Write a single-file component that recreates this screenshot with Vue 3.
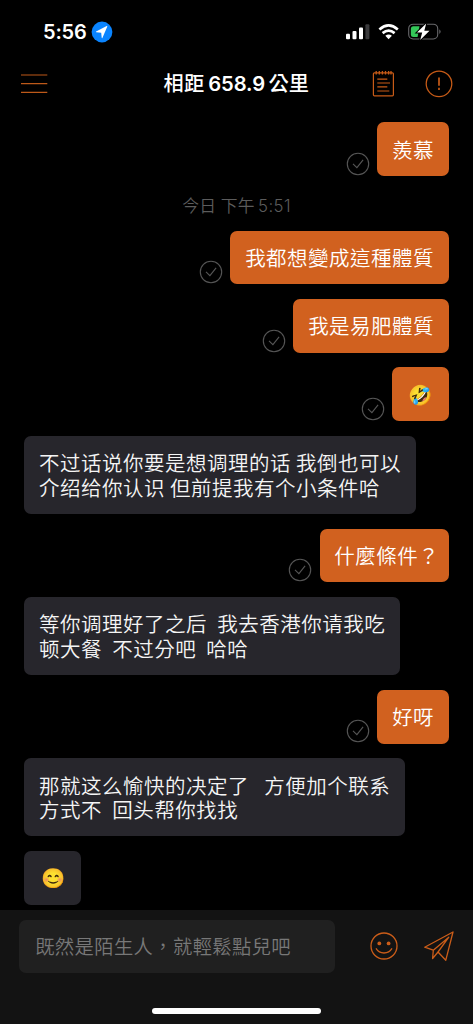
<script setup>
const messages = [
  { id: 1, mine: true, text: '羨慕' },
  { id: 2, time: '今日 下午', clock: '5:51' },
  { id: 3, mine: true, text: '我都想變成這種體質' },
  { id: 4, mine: true, text: '我是易肥體質' },
  { id: 5, mine: true, emoji: '🤣' },
  { id: 6, text: '不过话说你要是想调理的话 我倒也可以\n介绍给你认识 但前提我有个小条件哈' },
  { id: 7, mine: true, text: '什麼條件', mark: '？' },
  { id: 8, text: '等你调理好了之后  我去香港你请我吃\n顿大餐  不过分吧  哈哈' },
  { id: 9, mine: true, text: '好呀' },
  { id: 10, text: '那就这么愉快的决定了   方便加个联系\n方式不  回头帮你找找' },
  { id: 11, emoji: '😊' },
]
</script>

<template>
  <div class="screen" lang="zh-Hant">
    <div class="status">
      <span class="clock">5:56</span>
      <svg class="loc" width="22" height="22" viewBox="0 0 22 22">
        <circle cx="11" cy="11" r="10.4" fill="#0a84ff" />
        <path d="M16.3 5.5 11.4 17Q10.9 17.4 10.7 16.7L10.2 11.8 5.3 11.3Q4.6 11 5.1 10.5L15.7 5Q16.5 4.8 16.3 5.5Z" fill="#fff" />
      </svg>
      <svg class="radio" width="98" height="18" viewBox="0 0 98 18">
        <g fill="#fff">
          <rect x="2" y="10.7" width="4" height="5.5" rx="1" />
          <rect x="8.5" y="8" width="4" height="8.2" rx="1" />
          <rect x="15" y="4.5" width="4" height="11.7" rx="1" />
          <rect x="21.4" y="1.2" width="4" height="15" rx="1" fill="#3a3a3c" />
          <path d="M44.6 16.2 41.3 12.8Q44.6 10.1 47.9 12.8Z" />
        </g>
        <g fill="none" stroke="#fff" stroke-width="2.7">
          <path d="M35.4 6.4Q44.6 -1.5 53.8 6.4" />
          <path d="M38.6 10.1Q44.6 5.1 50.6 10.1" />
        </g>
        <rect x="64.7" y="1.2" width="29" height="14.8" rx="4.4" fill="none" stroke="#68686b" stroke-width="1.1" />
        <path d="M95.3 6.3Q98 8.6 95.3 11.1Z" fill="#68686b" />
        <path d="M69.4 3.2H75.5L73.6 14.1H69.4Q66.9 14.1 66.9 11.6V5.7Q66.9 3.2 69.4 3.2Z" fill="#34c759" />
        <path d="M82.2.4 73 9.5H78.2L76.2 17 85.5 7.7H80.3Z" fill="#fff" stroke="#000" stroke-width="2" paint-order="stroke" />
      </svg>
    </div>

    <header class="nav">
      <svg class="menu" width="28" height="24" viewBox="0 0 28 24" stroke="#bd5919" stroke-width="1.2">
        <path d="M1 3H27.3M1 11.7H27.3M1 20.4H27.3" />
      </svg>
      <h1 class="title">相距<span class="num">658.9</span>公里</h1>
      <svg class="note" width="24" height="28" viewBox="0 0 24 28" fill="none" stroke="#c75b17" stroke-width="1.2">
        <rect x="2.4" y="2.8" width="20" height="23" rx="1" />
        <path d="M5.2 1V4.6M8.3 1V4.6M11.4 1V4.6M14.5 1V4.6M17.6 1V4.6M20 1V4.6" stroke-width="1.3" />
        <path d="M6.3 9.1H16.3M6.3 13H19M6.3 16.9H16.3M6.3 21H18.3" />
      </svg>
      <svg class="alert" width="28" height="28" viewBox="0 0 28 28" fill="none" stroke="#c75b17">
        <circle cx="14" cy="13.8" r="12.8" stroke-width="1.25" />
        <path d="M14 7.4V15.7M14 17.8V20" stroke-width="1.7" />
      </svg>
    </header>

    <main class="chat">
      <template v-for="m in messages" :key="m.id">
        <div v-if="m.time" class="stamp">{{ m.time }}<span class="stamp-num">{{ m.clock }}</span></div>
        <div v-else class="row" :class="{ mine: m.mine }">
          <svg v-if="m.mine" class="tick" width="24" height="24" viewBox="0 0 24 24" fill="none" stroke="#565656" stroke-width="1.1">
            <circle cx="12" cy="12" r="10.7" />
            <path d="M7 11.8 10.9 15.6 17.1 7.8" />
          </svg>
          <div class="bubble">
            <span v-if="m.emoji" class="emoji">{{ m.emoji }}</span>
            <div v-else class="text">{{ m.text }}<span v-if="m.mark" class="mark">{{ m.mark }}</span></div>
          </div>
        </div>
      </template>
    </main>

    <footer class="composer">
      <div class="tools">
        <div class="field">既然是陌生人，就輕鬆點兒吧</div>
        <svg class="smile" width="28" height="28" viewBox="0 0 28 28" fill="none" stroke="#cb5d19" stroke-width="1.3">
          <circle cx="14" cy="14" r="13" />
          <path d="M6 16.4Q8.8 21 14 21T22 16.4" />
          <g fill="#cb5d19" stroke="none">
            <circle cx="9.3" cy="11.4" r="1.9" />
            <circle cx="18.6" cy="11.4" r="1.9" />
          </g>
        </svg>
        <svg class="send" width="32" height="32" viewBox="0 0 32 32" fill="none" stroke="#cb5d19" stroke-width="1.3" stroke-linejoin="round">
          <path d="M30 2 1.7 17.2 10.3 20.2 25.8 7.2 15 22 22.8 30.2ZM10.3 20.2 9.6 28.5 15 22" />
        </svg>
      </div>
      <div class="home"></div>
    </footer>
  </div>
</template>

<style>
body {
  background: #000;
}
</style>

<style scoped>
.screen {
  width: 473px;
  height: 1024px;
  overflow: hidden;
  display: flex;
  flex-direction: column;
  background: #000;
  font-family: "Noto Sans CJK TC", "Noto Sans CJK SC", sans-serif;
}
.status {
  height: 63px;
  flex: none;
  box-sizing: border-box;
  padding: 0 31px 0 43px;
  display: flex;
  align-items: center;
}
.clock {
  width: 48px;
  font: 600 20px/24px Inter, sans-serif;
  letter-spacing: -0.2px;
  color: #fff;
}
.loc {
  flex: none;
}
.radio {
  margin-left: auto;
}
.nav {
  height: 41px;
  flex: none;
  box-sizing: border-box;
  padding: 0 20px;
  display: grid;
  grid-template-columns: 28px 1fr 24px 28px;
  column-gap: 30px;
  align-items: center;
}
.title {
  margin: 0 0 0 85.5px;
  font-size: 20.2px;
  font-weight: 500;
  line-height: 30px;
  letter-spacing: 0.2px;
  white-space: nowrap;
  color: #fff;
}
.num {
  margin: 0 3.4px 0 4px;
  font-family: Inter, sans-serif;
  font-weight: 600;
  letter-spacing: -0.1px;
}
.chat {
  flex: none;
  height: 806px;
  box-sizing: border-box;
  padding: 18.2px 24.2px 0 24.3px;
  display: flex;
  flex-direction: column;
  gap: 14.6px;
  overflow: hidden;
}
.row {
  display: flex;
  align-items: flex-end;
  flex: none;
}
.mine {
  justify-content: flex-end;
}
.tick {
  margin: 0 7.4px 0.2px 0;
  flex: none;
}
.bubble {
  box-sizing: border-box;
  padding: 14.5px 14.7px 14.9px;
  border-radius: 7px;
  background: #27262c;
  color: #f5f5f5;
  font-size: 20.5px;
  font-weight: 350;
  line-height: 24.4px;
  letter-spacing: 0.5px;
}
.mine .bubble {
  background: #d1611f;
  color: #fff;
}
.text {
  white-space: pre;
}
.mark {
  letter-spacing: -4.6px;
}
.emoji {
  display: block;
  width: 27.5px;
  height: 24.4px;
  text-align: center;
  font-size: 19.5px;
  letter-spacing: 0;
}
.stamp {
  flex: none;
  height: 25.4px;
  line-height: 28.6px;
  text-align: center;
  font-size: 16.8px;
  font-weight: 350;
  letter-spacing: 0.4px;
  color: #5c5c5c;
}
.stamp-num {
  margin-left: 3px;
  font-family: Inter, sans-serif;
}
.composer {
  flex: 1;
  background: #131313;
}
.tools {
  display: flex;
  align-items: center;
  padding: 10px 18.5px 0 19px;
}
.field {
  width: 316px;
  height: 53px;
  box-sizing: border-box;
  padding-left: 16.2px;
  border-radius: 7px;
  background: #202020;
  color: #787878;
  font-size: 19.3px;
  font-weight: 350;
  line-height: 53px;
  letter-spacing: 0.4px;
  white-space: nowrap;
}
.smile {
  margin: 0 0 1.4px 34.6px;
}
.send {
  margin: 0 0 1.6px auto;
}
.home {
  width: 169px;
  height: 6.4px;
  margin: 34.9px auto 0;
  border-radius: 4px;
  background: #fff;
}
</style>
